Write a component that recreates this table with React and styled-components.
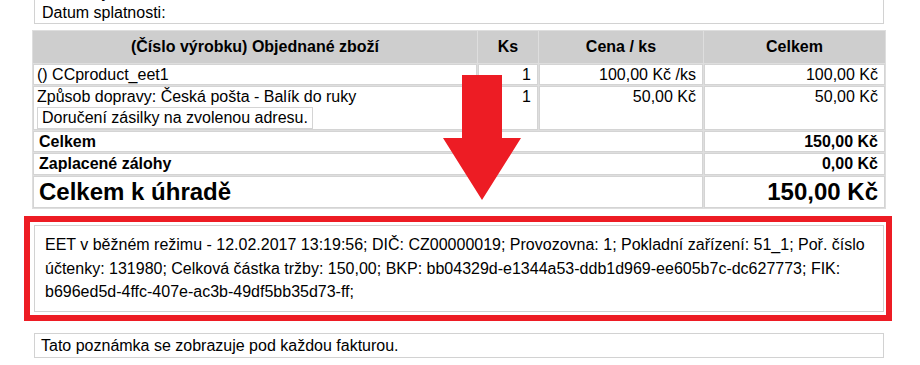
import React from 'react';
import styled, { createGlobalStyle } from 'styled-components';

const GlobalStyle = createGlobalStyle`
  html, body {
    margin: 0;
    padding: 0;
    background: #fff;
  }
  body {
    font-family: 'Liberation Sans', Arial, Helvetica, sans-serif;
    font-size: 16px;
    color: #000;
    overflow: hidden;
    height: 365px;
  }
`;

const Page = styled.div`
  position: relative;
  display: flow-root;
  width: 852px;
  margin-left: 33px;
`;

const InfoBox = styled.div`
  margin: -17px 1px 0;
  padding: 0 7px;
  border: 1px solid #d2d2d2;
  border-top: none;
  line-height: 20px;
`;

const InvoiceTable = styled.table`
  width: 852px;
  margin-top: 6px;
  margin-left: -1px;
  table-layout: fixed;
  border-collapse: separate;
  border-spacing: 1px;
  background: #dedede;
`;

const HeadCell = styled.th`
  height: 30px;
  padding: 0;
  background: #cecece;
  border: 1px solid #cecece;
  font-size: 16px;
  font-weight: bold;
  text-align: center;
`;

const Cell = styled.td`
  background: #fff;
  border: 1px solid #d4d4d4;
  padding: 0 ${(p) => (p.$right ? '6px' : '3px')} 0 ${(p) => (p.$bold ? '5px' : '3px')};
  height: ${(p) => p.$h || 20}px;
  line-height: ${(p) => (p.$h && p.$h < 20 ? p.$h : 20)}px;
  vertical-align: ${(p) => (p.$top ? 'top' : 'middle')};
  text-align: ${(p) => (p.$right ? 'right' : 'left')};
  font-size: ${(p) => (p.$big ? '24px' : '16px')};
  font-weight: ${(p) => (p.$bold ? 'bold' : 'normal')};
  white-space: nowrap;
`;

const Note = styled.div`
  display: table;
  padding: 0 3px;
  border: 1px solid #d4d4d4;
  line-height: 18px;
`;

const EetFrame = styled.div`
  margin: 7px -7px 0 -9px;
  border: 6px solid #ed1c24;
  padding: 3px 2px 3px 4px;
`;

const EetBox = styled.div`
  border: 1px solid #d2d2d2;
  padding: 7px 10px 7px;
  line-height: 23.5px;
  font-size: 16px;
`;

const FooterNote = styled.div`
  margin: 12px 1px 0;
  padding: 0 6px;
  border: 1px solid #d2d2d2;
  line-height: 23px;
`;

const Arrow = styled.svg`
  position: absolute;
  left: 410px;
  top: 75px;
`;

const DownArrow = () => (
  <Arrow width="78" height="125" viewBox="0 0 78 125">
    <path d="M19 0 H59 V63 H78 L39 125 L0 63 H19 Z" fill="#ed1c24" />
  </Arrow>
);

const App = () => (
  <Page>
    <GlobalStyle />
    <InfoBox>
      <div>Datum vystavení: 12.02.2017</div>
      <div>Datum splatnosti:</div>
    </InfoBox>
    <InvoiceTable>
      <colgroup>
        <col style={{ width: 444 }} />
        <col style={{ width: 60 }} />
        <col style={{ width: 164 }} />
        <col style={{ width: 181 }} />
      </colgroup>
      <thead>
        <tr>
          <HeadCell>(Číslo výrobku) Objednané zboží</HeadCell>
          <HeadCell>Ks</HeadCell>
          <HeadCell>Cena / ks</HeadCell>
          <HeadCell>Celkem</HeadCell>
        </tr>
      </thead>
      <tbody>
        <tr>
          <Cell $h={19}>() CCproduct_eet1</Cell>
          <Cell $right $h={19}>1</Cell>
          <Cell $right $h={19}>100,00 Kč /ks</Cell>
          <Cell $right $h={19}>100,00 Kč</Cell>
        </tr>
        <tr>
          <Cell $top $h={41}>
            Způsob dopravy: Česká pošta - Balík do ruky
            <Note>Doručení zásilky na zvolenou adresu.</Note>
          </Cell>
          <Cell $right $top $h={41}>1</Cell>
          <Cell $right $top $h={41}>50,00 Kč</Cell>
          <Cell $right $top $h={41}>50,00 Kč</Cell>
        </tr>
        <tr>
          <Cell colSpan={3} $bold $h={19}>Celkem</Cell>
          <Cell $right $bold $h={19}>150,00 Kč</Cell>
        </tr>
        <tr>
          <Cell colSpan={3} $bold>Zaplacené zálohy</Cell>
          <Cell $right $bold>0,00 Kč</Cell>
        </tr>
        <tr>
          <Cell colSpan={3} $bold $big $h={30}>Celkem k úhradě</Cell>
          <Cell $right $bold $big $h={30}>150,00 Kč</Cell>
        </tr>
      </tbody>
    </InvoiceTable>
    <EetFrame>
      <EetBox>
        EET v běžném režimu - 12.02.2017 13:19:56; DIČ: CZ00000019; Provozovna: 1; Pokladní zařízení: 51_1; Poř. číslo
        účtenky: 131980; Celková částka tržby: 150,00; BKP: bb04329d-e1344a53-ddb1d969-ee605b7c-dc627773; FIK:
        b696ed5d-4ffc-407e-ac3b-49df5bb35d73-ff;
      </EetBox>
    </EetFrame>
    <FooterNote>Tato poznámka se zobrazuje pod každou fakturou.</FooterNote>
    <DownArrow />
  </Page>
);

export default App;
